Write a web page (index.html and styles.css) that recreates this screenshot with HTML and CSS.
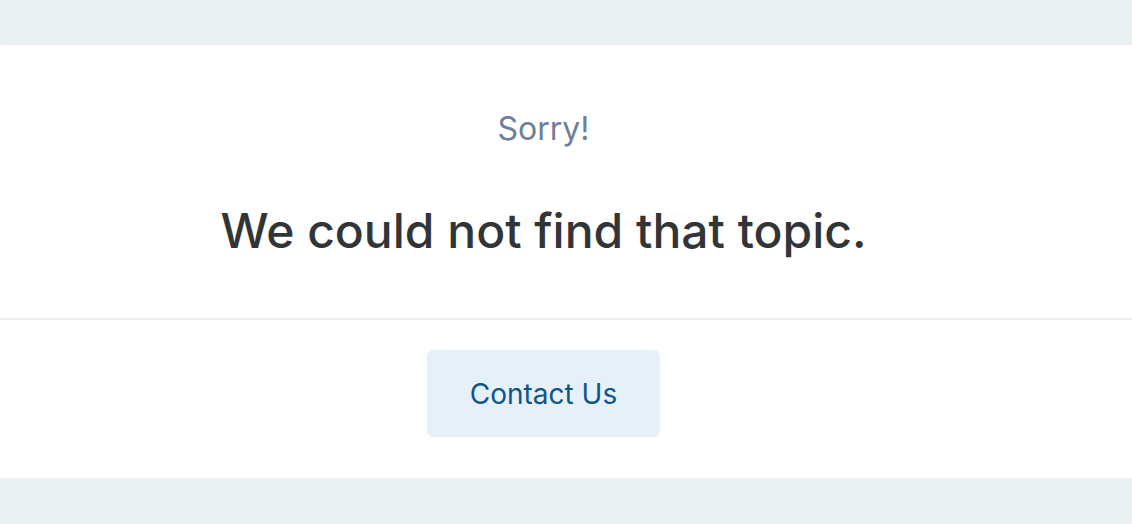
FILE: index.html
```html
<!DOCTYPE html>
<html lang="en">
  <head>
    <meta charset="UTF-8" />
    <meta name="viewport" content="width=device-width, initial-scale=1.0" />
    <title>Topic not found</title>
    <link rel="stylesheet" href="styles.css">
  </head>
  <body>
    <main class="card">
      <div class="message">
        <p class="sorry">Sorry!</p>
        <h1 class="headline">We could not find that topic.</h1>
      </div>
      <div class="actions">
        <a class="contact-btn" href="#">Contact Us</a>
      </div>
    </main>
  </body>
</html>
```

FILE: styles.css
```css
body {
  font-family: Inter, "Noto Sans", sans-serif;
  margin: 0;
  padding: 45px 0 0;
  background-color: #ebf0f3;
}

.card {
  background-color: #fff;
  box-shadow: 0 2px 5px rgba(0, 0, 0, 0.08);
  padding-right: 45px;
}

.message {
  height: 275px;
  box-sizing: border-box;
  padding-top: 64px;
  text-align: center;
  border-bottom: 2px solid #eeeeee;
  margin-right: -45px;
  padding-right: 45px;
}

.sorry {
  margin: 0;
  font-size: 32px;
  line-height: 40px;
  color: #6e7f9b;
}

.headline {
  margin: 52px 0 0;
  font-size: 48px;
  line-height: 60px;
  font-weight: 500;
  color: #323538;
}

.actions {
  display: flex;
  justify-content: center;
  padding: 30px 0 41px;
}

.contact-btn {
  display: flex;
  align-items: center;
  justify-content: center;
  width: 233px;
  height: 87px;
  border-radius: 6px;
  background-color: #e6f0f9;
  color: #0f5587;
  font-size: 28px;
  text-decoration: none;
}
```
